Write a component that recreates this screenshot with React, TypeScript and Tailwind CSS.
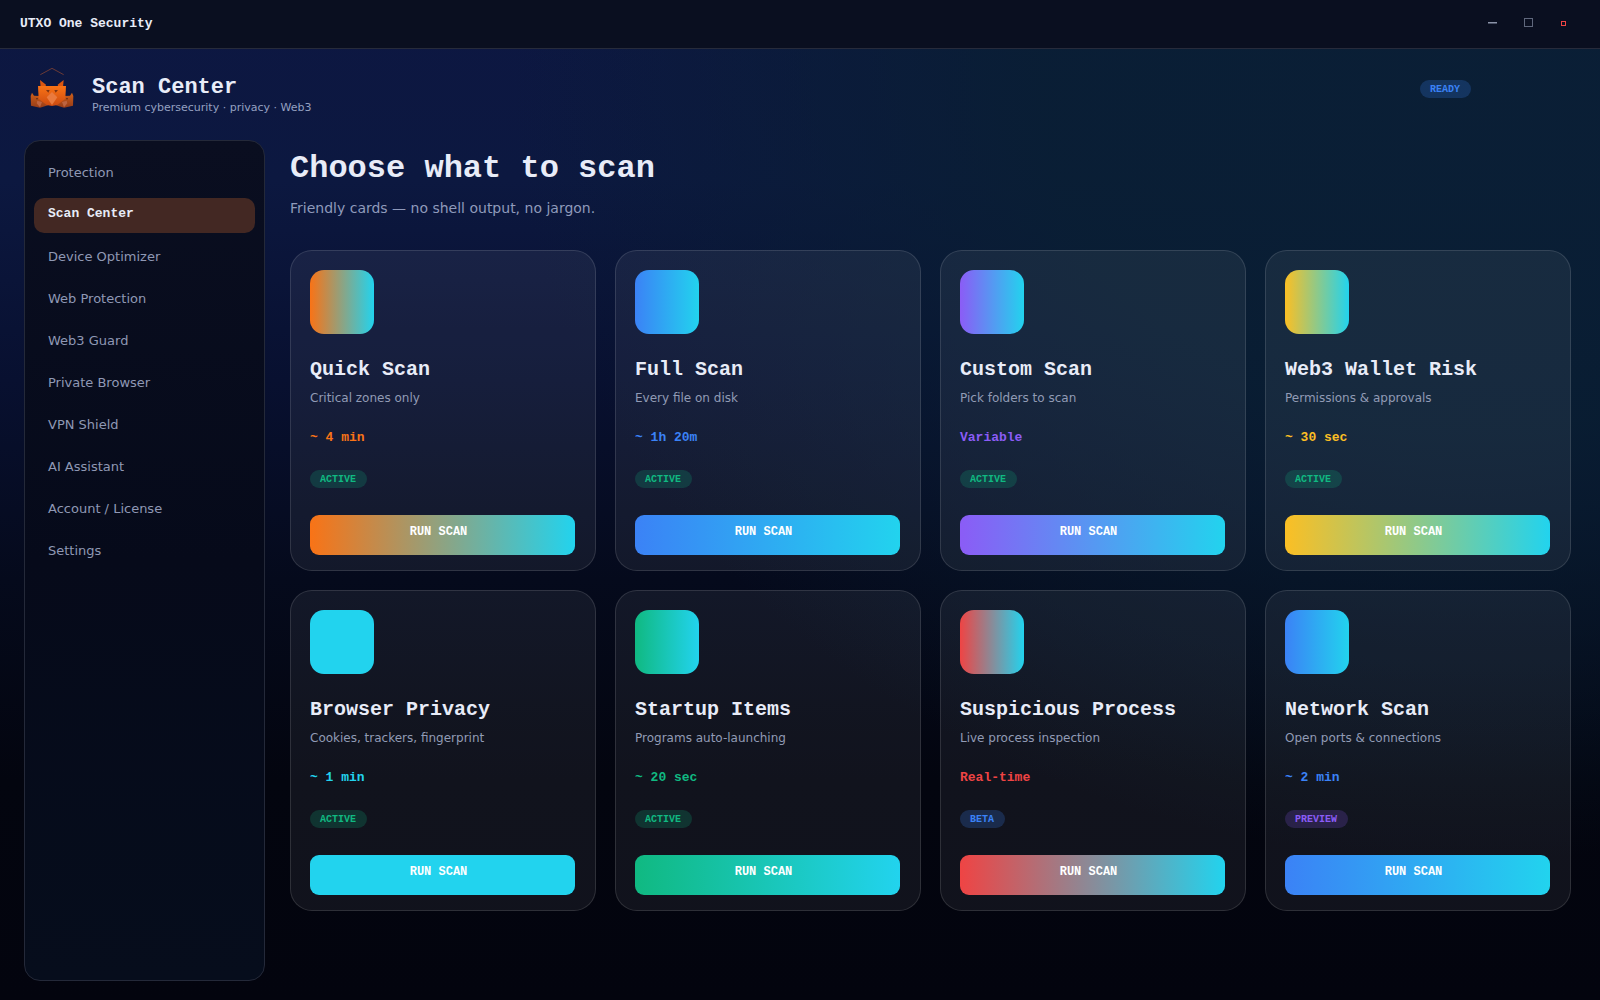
const navItems = [
  'Protection', 'Scan Center', 'Device Optimizer', 'Web Protection', 'Web3 Guard',
  'Private Browser', 'VPN Shield', 'AI Assistant', 'Account / License', 'Settings',
];

const badgeTones = {
  ACTIVE: 'bg-[#10b981]/20 text-[#10b981]',
  BETA: 'bg-[#3b82f6]/22 text-[#3b82f6]',
  READY: 'bg-[#3b82f6]/22 text-[#3b82f6]',
  PREVIEW: 'bg-[#8b5cf6]/20 text-[#8b5cf6]',
};

type Tone = keyof typeof badgeTones;

const scans: { title: string; text: string; time: string; badge: Tone; from: string; color: string }[] = [
  { title: 'Quick Scan', text: 'Critical zones only', time: '~ 4 min', badge: 'ACTIVE', from: 'from-[#f97316]', color: 'text-[#f97316]' },
  { title: 'Full Scan', text: 'Every file on disk', time: '~ 1h 20m', badge: 'ACTIVE', from: 'from-[#3b82f6]', color: 'text-[#3b82f6]' },
  { title: 'Custom Scan', text: 'Pick folders to scan', time: 'Variable', badge: 'ACTIVE', from: 'from-[#8b5cf6]', color: 'text-[#8b5cf6]' },
  { title: 'Web3 Wallet Risk', text: 'Permissions & approvals', time: '~ 30 sec', badge: 'ACTIVE', from: 'from-[#fbbf24]', color: 'text-[#fbbf24]' },
  { title: 'Browser Privacy', text: 'Cookies, trackers, fingerprint', time: '~ 1 min', badge: 'ACTIVE', from: 'from-[#22d3ee]', color: 'text-[#22d3ee]' },
  { title: 'Startup Items', text: 'Programs auto-launching', time: '~ 20 sec', badge: 'ACTIVE', from: 'from-[#10b981]', color: 'text-[#10b981]' },
  { title: 'Suspicious Process', text: 'Live process inspection', time: 'Real-time', badge: 'BETA', from: 'from-[#ef4444]', color: 'text-[#ef4444]' },
  { title: 'Network Scan', text: 'Open ports & connections', time: '~ 2 min', badge: 'PREVIEW', from: 'from-[#3b82f6]', color: 'text-[#3b82f6]' },
];

const mono = "font-['Liberation_Mono',monospace] font-bold";

function Badge({ label }: { label: Tone }) {
  return (
    <span className={`inline-flex h-[18px] items-center self-start rounded-full pl-2.5 pr-[11px] pt-px text-[10px] leading-none ${mono} ${badgeTones[label]}`}>
      {label}
    </span>
  );
}

function Head() {
  return (
    <g>
      <path d="M60 60 L78 74 L76 82 H62 Z M131 60 L113 74 L115 82 H129 Z" fill="#dc5710" />
      <path d="M54 78 H138 L136 116 L112 135 L96 138 L80 135 L56 116 Z" fill="url(#fur)" />
      <path d="M78 90 H89 L85 98 Z M103 90 H114 L107 98 Z" fill="#7c3413" />
      <path d="M96 96 L112 112 L96 135 L80 112 Z" fill="#ea7a3e" />
    </g>
  );
}

function Cub() {
  return (
    <g>
      <path d="M32 108 L36 98 L42 107 L58 108 L72 124 L84 136 L60 143 L33 137 Z" fill="url(#cub)" />
      <path d="M48 114 H54 L51 120 Z" fill="#5e2b16" />
      <path d="M52 122 L66 126 L60 142 L50 130 Z" fill="#bd6440" />
    </g>
  );
}

function Logo() {
  return (
    <svg viewBox="0 0 180 180" className="size-[60px]" aria-hidden="true">
      <defs>
        <linearGradient id="fur" x1="0" y1="0" x2="0" y2="1">
          <stop offset="0" stopColor="#f97316" />
          <stop offset="1" stopColor="#cc4a10" />
        </linearGradient>
        <linearGradient id="cub" x1="0" y1="0" x2="0" y2="1">
          <stop offset="0" stopColor="#cf6019" />
          <stop offset="1" stopColor="#963c18" />
        </linearGradient>
      </defs>
      <path d="M61 44 L96 25 L131 44" fill="none" stroke="#6b3a36" strokeWidth="3" />
      <Cub />
      <g transform="translate(192 0) scale(-1 1)"><Cub /></g>
      <Head />
    </svg>
  );
}

export default function App() {
  return (
    <div className="flex min-h-screen flex-col bg-[radial-gradient(ellipse_60%_78%_at_92%_8%,rgba(10,31,53,0.95)_0%,rgba(9,31,51,0.85)_45%,rgba(9,31,51,0)_100%),linear-gradient(to_bottom,#0d1742_0%,#0c1840_18%,#081030_38%,#050a1c_58%,#03050f_78%,#03040e_100%)] font-['DejaVu_Sans',sans-serif] text-[#e8ecf8]">
      <header className="flex h-[49px] items-center justify-between border-b border-[#272b3b] bg-[#0a0f20] pl-5 pr-[18px]">
        <span className={`text-[13px] leading-4 ${mono}`}>UTXO One Security</span>
        <div className="flex pb-1">
          <button aria-label="Minimize" className="flex h-6 w-9 items-center justify-center pt-0.5"><span className="h-0.5 w-[9px] border-b border-[#4a5165] bg-[#8b93a8]" /></button>
          <button aria-label="Maximize" className="flex h-6 w-9 items-center justify-center"><span className="size-[9px] border border-[#5f677c]" /></button>
          <button aria-label="Close" className="flex h-6 w-9 items-center justify-center pr-0.5 pt-0.5"><span className="size-[5px] border border-[#ef4444]" /></button>
        </div>
      </header>

      <div className="flex h-[91px] items-start pl-5 pr-[129px] pt-[11px]">
        <Logo />
        <div className="flex-1 pl-3 pt-4">
          <h1 className={`text-[22px] leading-6 ${mono}`}>Scan Center</h1>
          <p className="text-[11px] leading-4 text-[#94a0c0]">Premium cybersecurity · privacy · Web3</p>
        </div>
        <div className="flex pt-5"><Badge label="READY" /></div>
      </div>

      <div className="flex flex-1 pb-[19px] pl-6 pr-[29px]">
        <nav className="flex w-[241px] shrink-0 flex-col gap-[7px] rounded-[16px] border border-[#242939] bg-linear-to-b from-[#0a0e20] via-[#060a1a] to-[#060d1c] px-[9px] pt-[15px]">
          {navItems.map((item) => (
            <a
              key={item}
              href="#"
              className={item === 'Scan Center'
                ? `flex h-[35px] items-center rounded-[10px] bg-[#432823] px-3.5 pb-[3px] text-[13px] ${mono}`
                : 'flex h-[35px] items-center px-3.5 pb-0.5 text-[13px] text-[#8f98b4]'}
            >
              {item}
            </a>
          ))}
        </nav>

        <main className="min-w-0 flex-1 pl-[25px] pt-[9px]">
          <h2 className={`text-[32px] leading-10 ${mono}`}>Choose what to scan</h2>
          <p className="mt-[9px] text-[14px] leading-5 text-[#8f9abb]">Friendly cards — no shell output, no jargon.</p>
          <div className="mt-8 grid grid-cols-4 gap-[19px]">
            {scans.map((scan) => (
              <section key={scan.title} className="flex flex-col rounded-[22px] border border-white/12 bg-white/6 pb-[15px] pl-[19px] pr-5 pt-[19px]">
                <div className={`size-16 rounded-[14px] bg-linear-to-r/srgb to-[#22d3ee] ${scan.from}`} />
                <h3 className={`mt-6 text-[20px] leading-6 ${mono}`}>{scan.title}</h3>
                <p className="mt-2 text-[12px] leading-4 text-[#919bb5]">{scan.text}</p>
                <p className={`mt-6 text-[13px] leading-4 ${mono} ${scan.color}`}>{scan.time}</p>
                <div className="mt-6 flex"><Badge label={scan.badge} /></div>
                <button className={`mt-[27px] h-10 rounded-[9px] bg-linear-to-r/srgb to-[#22d3ee] pb-1.5 pr-2 text-[12px] text-white ${mono} ${scan.from}`}>
                  RUN SCAN
                </button>
              </section>
            ))}
          </div>
        </main>
      </div>
    </div>
  );
}
